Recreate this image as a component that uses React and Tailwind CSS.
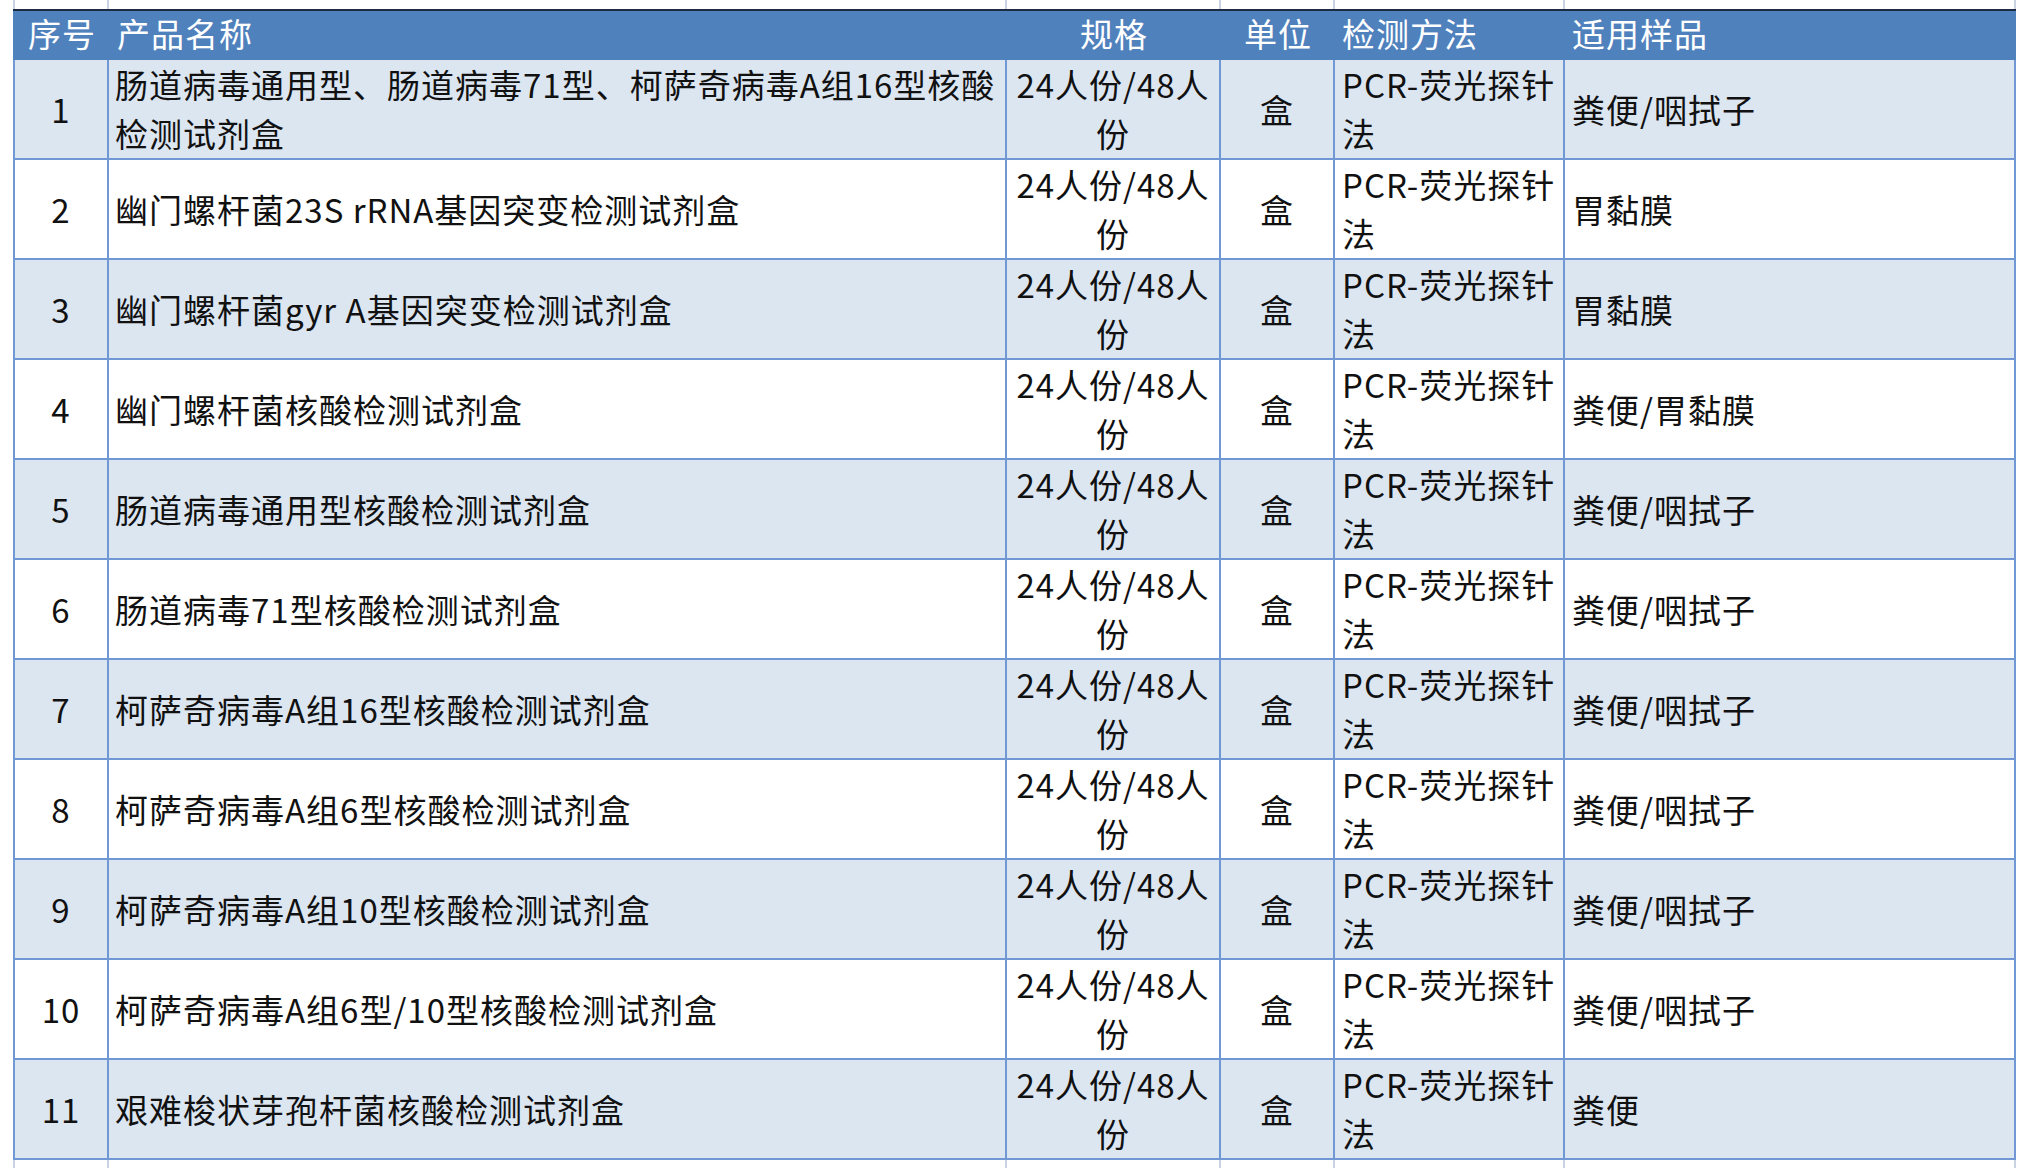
import React from "react";

const cols = [
  "w-[94px] justify-center",
  "w-[898px] justify-start pl-[6px]",
  "w-[214px] justify-center text-center",
  "w-[114px] justify-center",
  "w-[230px] justify-start pl-[7px]",
  "w-[449px] justify-start pl-[7px]",
];

const spec = (
  <>
    24人份/48人
    <br />
    份
  </>
);
const method = (
  <>
    PCR-荧光探针
    <br />
    法
  </>
);

const rows = [
  [
    "1",
    <>
      肠道病毒通用型、肠道病毒71型、柯萨奇病毒A组16型核酸
      <br />
      检测试剂盒
    </>,
    "粪便/咽拭子",
  ],
  ["2", "幽门螺杆菌23S rRNA基因突变检测试剂盒", "胃黏膜"],
  ["3", "幽门螺杆菌gyr A基因突变检测试剂盒", "胃黏膜"],
  ["4", "幽门螺杆菌核酸检测试剂盒", "粪便/胃黏膜"],
  ["5", "肠道病毒通用型核酸检测试剂盒", "粪便/咽拭子"],
  ["6", "肠道病毒71型核酸检测试剂盒", "粪便/咽拭子"],
  ["7", "柯萨奇病毒A组16型核酸检测试剂盒", "粪便/咽拭子"],
  ["8", "柯萨奇病毒A组6型核酸检测试剂盒", "粪便/咽拭子"],
  ["9", "柯萨奇病毒A组10型核酸检测试剂盒", "粪便/咽拭子"],
  ["10", "柯萨奇病毒A组6型/10型核酸检测试剂盒", "粪便/咽拭子"],
  ["11", "艰难梭状芽孢杆菌核酸检测试剂盒", "粪便"],
];

// faint cut-off rows above and below the table
const Strip = ({ h }) => (
  <div className={`flex ${h} border-x-2 border-[#c9d3e2]`}>
    {cols.map((c, i) => (
      <div
        key={i}
        className={`${c.split(" ")[0]} ${i < 5 ? "border-r-2 border-[#c9d3e2]" : ""}`}
      />
    ))}
  </div>
);

export default function App() {
  return (
    <div className="w-[2030px] h-[1168px] overflow-hidden bg-white font-['Noto_Sans_CJK_SC','Noto_Sans',sans-serif] text-[33px] tracking-[1px] text-[#111]">
      <div className="ml-[13px] w-[2003px]">
        <Strip h="h-[9px]" />
        <div className="border-t-2 border-[#1d2b43]" />
        {/* header */}
        <div className="flex h-[49px] items-center pb-[5px] bg-[#4f81bd] text-white leading-[44px] border-x-2 border-[#4f81bd]">
          <div className={`flex ${cols[0]}`}>序号</div>
          <div className={`flex ${cols[1]} pl-[8px]`}>产品名称</div>
          <div className={`flex ${cols[2]}`}>规格</div>
          <div className={`flex ${cols[3]}`}>单位</div>
          <div className={`flex ${cols[4]}`}>检测方法</div>
          <div className={`flex ${cols[5]}`}>适用样品</div>
        </div>
        {/* body */}
        <div className="border-x-2 border-[#6f98d4]">
          {rows.map(([no, name, sample], i) => (
            <div
              key={no}
              className={`flex h-[100px] border-b-2 border-[#6f98d4] leading-[49px] ${
                i % 2 === 0 ? "bg-[#dce6f1]" : "bg-white"
              }`}
            >
              {[no, name, spec, "盒", method, sample].map((v, j) => (
                <div
                  key={j}
                  className={`flex items-center whitespace-nowrap ${cols[j]} ${
                    j < 5 ? "border-r-2 border-[#6f98d4]" : ""
                  }`}
                >
                  <div>{v}</div>
                </div>
              ))}
            </div>
          ))}
        </div>
        <Strip h="h-[10px]" />
      </div>
    </div>
  );
}
